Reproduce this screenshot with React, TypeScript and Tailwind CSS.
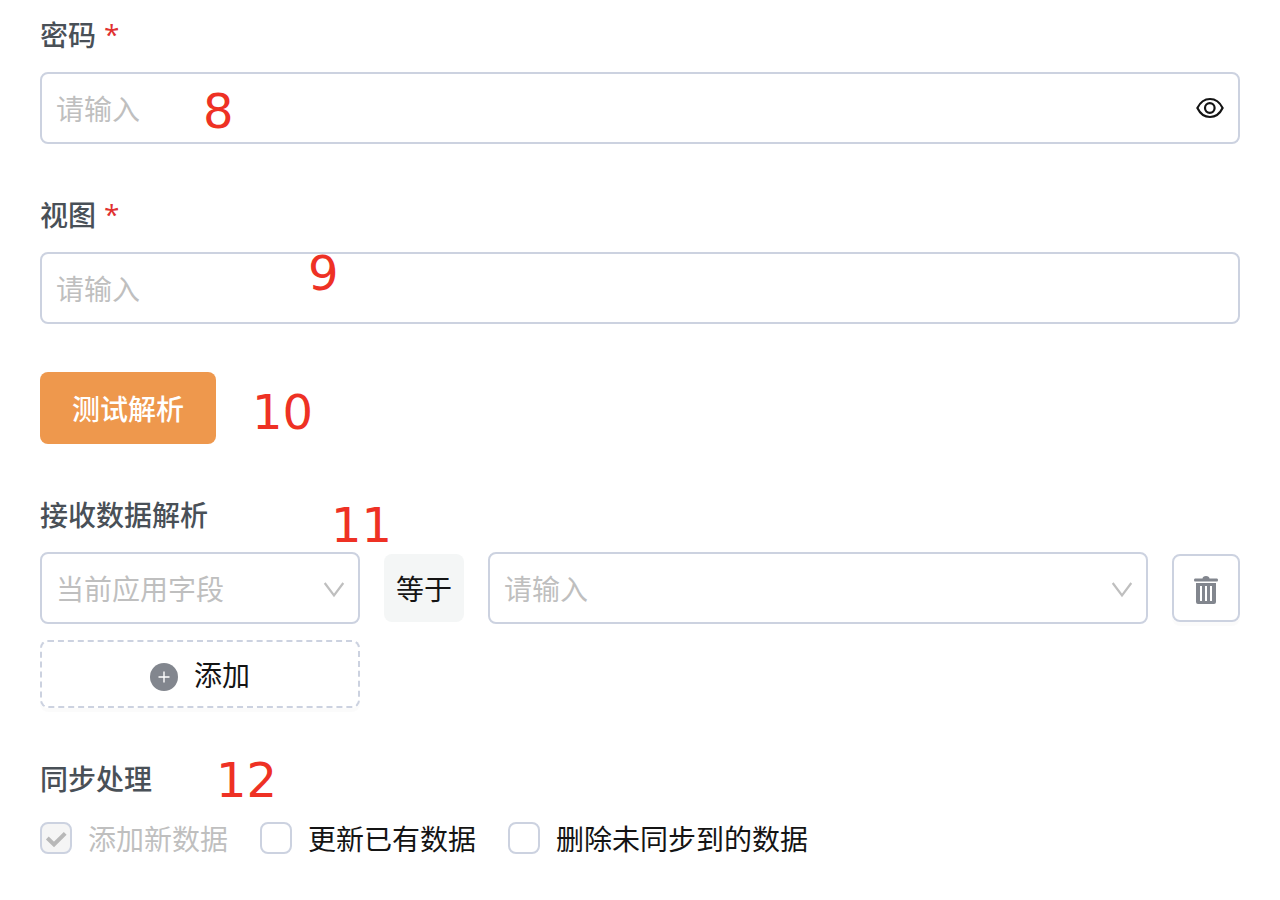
import React, { useState } from "react";

const App = () => {
	const [showPassword, setShowPassword] = useState(false);

	return (
		<form className="min-h-screen bg-white px-10 py-3 flex flex-col gap-12 font-['Noto_Sans_CJK_SC',sans-serif] text-[28px] leading-[44px] text-[#141414]">
			<div className="relative flex flex-col gap-4">
				<Label htmlFor="password" text="密码" required />
				<div className="relative">
					<input
						id="password"
						type={showPassword ? "text" : "password"}
						placeholder="请输入"
						className="block w-full h-18 rounded-lg border-2 border-[#ccd2e0] pl-3.5 pr-16 outline-none placeholder:text-[#bfbfbf]"
					/>
					<button
						type="button"
						aria-label="显示密码"
						onClick={() => setShowPassword(!showPassword)}
						className="absolute right-4 top-1/2 -translate-y-1/2 cursor-pointer">
						<EyeIcon />
					</button>
				</div>
				<Mark className="absolute left-[163px] top-[75px]" text="8" />
			</div>

			<div className="relative flex flex-col gap-4">
				<Label htmlFor="view" text="视图" required />
				<input
					id="view"
					type="text"
					placeholder="请输入"
					className="block w-full h-18 rounded-lg border-2 border-[#ccd2e0] px-3.5 outline-none placeholder:text-[#bfbfbf]"
				/>
				<Mark className="absolute left-[268px] top-[57px]" text="9" />
			</div>

			<div className="flex items-center gap-9">
				<button
					type="button"
					className="h-18 rounded-lg bg-[#ee984d] px-8 font-medium text-white cursor-pointer">
					测试解析
				</button>
				<Mark className="mt-2" text="10" />
			</div>

			<div className="relative flex flex-col items-start gap-4">
				<Label htmlFor="field" text="接收数据解析" />
				<div className="w-full flex items-center gap-6">
					<Select id="field" className="w-80" placeholder="当前应用字段" />
					<div className="h-17 w-20 shrink-0 rounded-lg bg-[#f4f6f6] flex items-center justify-center">
						等于
					</div>
					<Select id="value" className="flex-1" placeholder="请输入" />
					<button
						type="button"
						aria-label="删除"
						className="size-17 shrink-0 rounded-lg border-2 border-[#ccd2e0] flex items-center justify-center shadow-[0_4px_0_rgba(0,0,0,0.016)] cursor-pointer">
						<TrashIcon />
					</button>
				</div>
				<button
					type="button"
					className="h-17 w-80 rounded-lg border-2 border-dashed border-[#ccd2e0] flex items-center justify-center gap-4 shadow-[0_4px_0_rgba(0,0,0,0.016)] cursor-pointer">
					<PlusIcon />
					添加
				</button>
				<Mark className="absolute left-[291px] top-[9px]" text="11" />
			</div>

			<fieldset>
				<legend className="relative font-medium text-[#495057]">
					同步处理
					<Mark className="absolute left-44 top-0 font-normal" text="12" />
				</legend>
				<div className="mt-4 flex flex-wrap gap-x-8">
					<Checkbox text="添加新数据" checked disabled />
					<Checkbox text="更新已有数据" />
					<Checkbox text="删除未同步到的数据" />
				</div>
			</fieldset>
		</form>
	);
};

interface LabelProps {
	htmlFor: string;
	text: string;
	required?: boolean;
}

const Label = ({ htmlFor, text, required }: LabelProps) => {
	return (
		<label htmlFor={htmlFor} className="flex gap-2 font-medium text-[#495057]">
			{text}
			{required && (
				<span className="font-['Open_Sans',sans-serif] text-[#e03131]">*</span>
			)}
		</label>
	);
};

interface SelectProps {
	id: string;
	placeholder: string;
	className: string;
}

const Select = ({ id, placeholder, className }: SelectProps) => {
	return (
		<div className={`relative ${className}`}>
			<select
				id={id}
				aria-label={placeholder}
				defaultValue=""
				className="block w-full h-18 appearance-none rounded-lg border-2 border-[#ccd2e0] bg-white pl-3.5 pr-12 text-[#bfbfbf] outline-none">
				<option value="">{placeholder}</option>
			</select>
			<svg
				viewBox="0 0 24 16"
				className="pointer-events-none absolute right-3.5 top-7.5 h-4 w-6"
				fill="none"
				stroke="#bfbfbf"
				strokeWidth="2.2">
				<path d="M2.7 1 L12 13.5 L21.3 1" />
			</svg>
		</div>
	);
};

interface CheckboxProps {
	text: string;
	checked?: boolean;
	disabled?: boolean;
}

const Checkbox = ({ text, checked, disabled }: CheckboxProps) => {
	return (
		<label className="flex items-center gap-4 has-disabled:text-[#bfbfbf]">
			<span className="relative size-8">
				<input
					type="checkbox"
					defaultChecked={checked}
					disabled={disabled}
					className="peer block size-8 appearance-none rounded-lg border-2 border-[#ccd2e0] bg-white disabled:bg-[#f5f5f5]"
				/>
				<svg
					viewBox="0 0 32 32"
					className="pointer-events-none invisible absolute inset-0 size-8 peer-checked:visible"
					fill="none"
					stroke="#b8b8b8"
					strokeWidth="4">
					<path d="M7.3 16 L14 22.4 L25.2 11.4" />
				</svg>
			</span>
			{text}
		</label>
	);
};

interface MarkProps {
	text: string;
	className?: string;
}

const Mark = ({ text, className }: MarkProps) => {
	return (
		<span
			className={`pointer-events-none font-['DejaVu_Sans',sans-serif] text-5xl leading-none text-[#ee3124] ${className ?? ""}`}>
			{text}
		</span>
	);
};

const EyeIcon = () => (
	<svg viewBox="0 0 28 28" className="size-7" fill="none" stroke="#141414" strokeWidth="2.2">
		<path d="M1.4 14 C4.3 8 8.6 5 14 5 S23.7 8 26.6 14 C23.7 20 19.4 23 14 23 S4.3 20 1.4 14 Z" />
		<circle cx="13.8" cy="14" r="4.8" />
	</svg>
);

const TrashIcon = () => (
	<svg viewBox="0 0 24 28" className="mt-1 h-7 w-6" fill="#82868e">
		<path d="M8.5 2.5 Q8.7 0 12 0 Q15.3 0 15.5 2.5 H23 Q24 2.5 24 4 Q24 5.5 23 5.5 H1 Q0 5.5 0 4 Q0 2.5 1 2.5 Z" />
		<path
			fillRule="evenodd"
			d="M2 7 H22 V26 Q22 28 20 28 H4 Q2 28 2 26 Z M6 10 V25 H8 V10 Z M11 10 V25 H13 V10 Z M16 10 V25 H18 V10 Z"
		/>
	</svg>
);

const PlusIcon = () => (
	<svg viewBox="0 0 28 28" className="mt-1.5 size-7">
		<circle cx="14" cy="14" r="14" fill="#82868e" />
		<path d="M8.5 14 H19.5 M14 8.5 V19.5" stroke="#fff" strokeWidth="1.4" />
	</svg>
);

export default App;
